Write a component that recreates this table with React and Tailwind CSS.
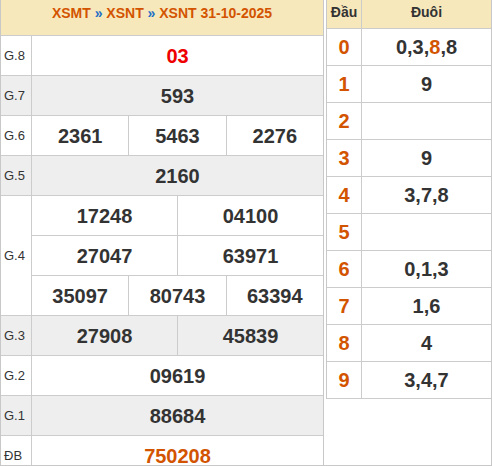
const F = "font-[family-name:Liberation_Sans,Arial,sans-serif]";

function Cells({ nums, cls = "text-[#333]" }) {
  return (
    <div className="flex flex-1 h-full">
      {nums.map((n, i) => (
        <div
          key={i}
          className={
            "flex-1 flex items-center justify-center font-bold text-[20px] " +
            cls +
            (i < nums.length - 1 ? " border-r border-[#ccc]" : "")
          }
        >
          {n}
        </div>
      ))}
    </div>
  );
}

function Row({ label, nums, gray, cls }) {
  return (
    <div className={"flex shrink-0 h-[40px] border-b border-[#ccc] " + (gray ? "bg-[#eeeeee]" : "bg-white")}>
      <div className="w-[31px] shrink-0 border-r border-[#ccc] flex items-center pl-[3px] text-[13px] text-[#333]">
        {label}
      </div>
      <Cells nums={nums} cls={cls} />
    </div>
  );
}

const heads = [
  ["0", [["0,3,", ""], ["8", "o"], [",8", ""]]],
  ["1", [["9", ""]]],
  ["2", []],
  ["3", [["9", ""]]],
  ["4", [["3,7,8", ""]]],
  ["5", []],
  ["6", [["0,1,3", ""]]],
  ["7", [["1,6", ""]]],
  ["8", [["4", ""]]],
  ["9", [["3,4,7", ""]]],
];

export default function App() {
  return (
    <div className={"w-[492px] h-[466px] overflow-hidden bg-white border-r border-b border-[#c8c8c8] flex items-start gap-[2px] " + F}>
      <div className="w-[324px] shrink-0 border-l border-r border-[#c8c8c8] flex flex-col">
        <div className="h-[36px] shrink-0 bg-[#f7e8bc] border-b border-[#ccc] flex justify-center pt-[5px] text-[14px] font-bold text-[#d35400] leading-[16px]">
          <span>
            XSMT <span className="text-[#1f6fc4]">»</span> XSNT <span className="text-[#1f6fc4]">»</span> XSNT 31-10-2025
          </span>
        </div>
        <Row label="G.8" nums={["03"]} cls="text-[#ee0000]" />
        <Row label="G.7" nums={["593"]} gray />
        <Row label="G.6" nums={["2361", "5463", "2276"]} />
        <Row label="G.5" nums={["2160"]} gray />
        <div className="flex h-[120px] shrink-0">
          <div className="w-[31px] shrink-0 border-r border-b border-[#ccc] flex items-center pl-[3px] text-[13px] text-[#333]">
            G.4
          </div>
          <div className="flex-1 flex flex-col">
            <div className="h-[40px] shrink-0 border-b border-[#ccc]">
              <Cells nums={["17248", "04100"]} />
            </div>
            <div className="h-[40px] shrink-0 border-b border-[#ccc]">
              <Cells nums={["27047", "63971"]} />
            </div>
            <div className="h-[40px] shrink-0 border-b border-[#ccc]">
              <Cells nums={["35097", "80743", "63394"]} />
            </div>
          </div>
        </div>
        <Row label="G.3" nums={["27908", "45839"]} gray />
        <Row label="G.2" nums={["09619"]} />
        <Row label="G.1" nums={["88684"]} gray />
        <Row label="ĐB" nums={["750208"]} cls="text-[#d35400]" />
      </div>
      <div className="w-[165px] shrink-0 border-l border-[#c8c8c8] flex flex-col">
        <div className="flex shrink-0 h-[29px] bg-[#f7e8bc] border-b border-[#ccc] text-[14px] font-bold text-[#333]">
          <div className="w-[35px] border-r border-[#ccc] flex items-center justify-center pb-[4px]">Đầu</div>
          <div className="flex-1 flex items-center justify-center pb-[4px]">Đuôi</div>
        </div>
        {heads.map(([d, t]) => (
          <div key={d} className="flex shrink-0 h-[37px] border-b border-[#ccc]">
            <div className="w-[35px] border-r border-[#ccc] flex items-center justify-center text-[20px] font-bold text-[#d35400]">
              {d}
            </div>
            <div className="flex-1 flex items-center justify-center text-[20px] font-bold text-[#333]">
              {t.map(([s, c], i) => (
                <span key={i} className={c ? "text-[#d35400]" : ""}>
                  {s}
                </span>
              ))}
            </div>
          </div>
        ))}
      </div>
    </div>
  );
}
